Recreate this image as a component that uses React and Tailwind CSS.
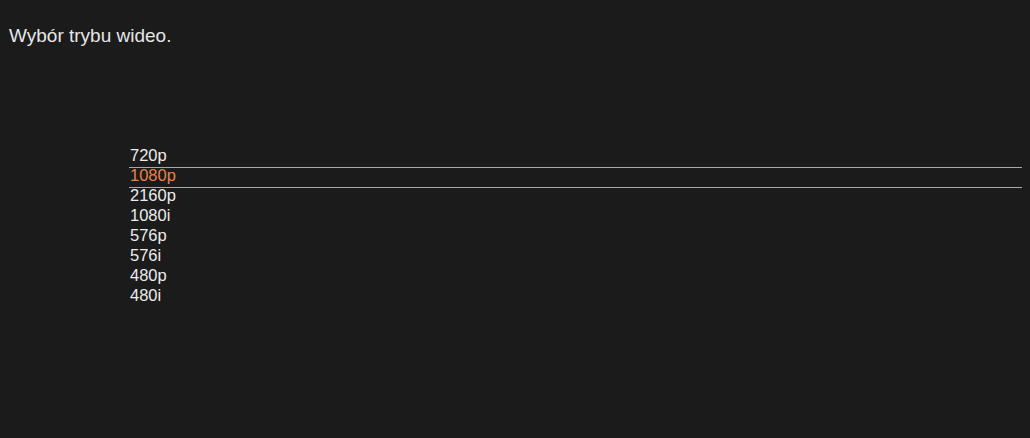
import React from 'react';

const modes = ['720p', '1080p', '2160p', '1080i', '576p', '576i', '480p', '480i'];
const selected = '1080p';

const App = () => {
    return (
        <div className="w-[1030px] h-[438px] bg-[#1b1b1b] font-['Liberation_Sans',Arial,sans-serif] overflow-hidden">
            <div className="pt-[24px] pl-[9px] text-[19px] leading-[24px] text-[#e6e6e6]">
                Wybór trybu wideo.
            </div>

            <div className="mt-[99px] ml-[129px] mr-[8px] flex flex-col">
                {modes.map((m) => (
                    <div
                        key={m}
                        className={
                            m === selected
                                ? 'h-[21px] -mb-[1px] pl-[1px] pb-[4px] flex items-center text-[16.5px] text-[#e8824a] border-y border-[#a8a8a8]'
                                : 'h-[20px] pl-[1px] pb-[4px] flex items-center text-[16.5px] text-[#ececec]'
                        }
                    >
                        {m}
                    </div>
                ))}
            </div>
        </div>
    );
};

export default App;
